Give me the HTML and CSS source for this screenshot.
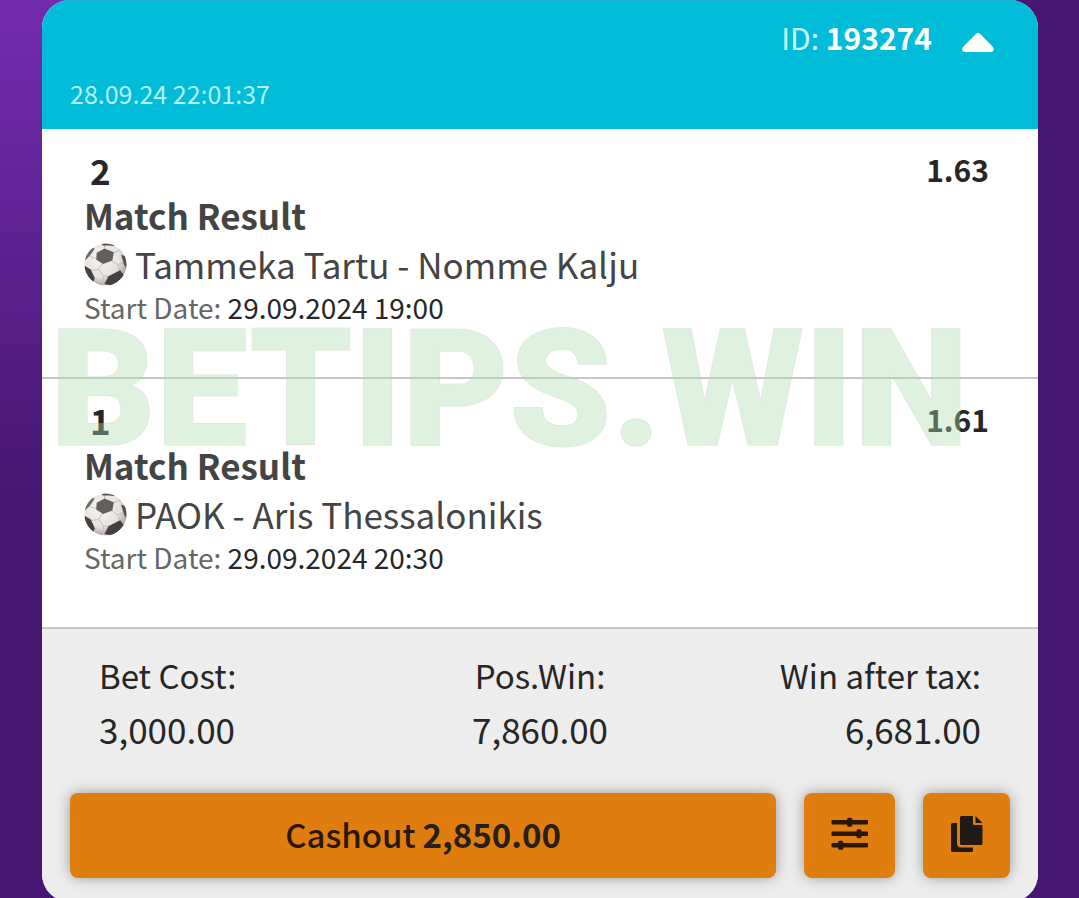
FILE: index.html
```html
<!DOCTYPE html>
<html lang="en">
<head>
<meta charset="utf-8">
<meta name="viewport" content="width=device-width, initial-scale=1">
<title>Bet 193274</title>
<link rel="stylesheet" href="styles.css">
</head>
<body>
<svg class="defs" width="0" height="0" aria-hidden="true">
  <defs>
    <radialGradient id="shade" cx="0.4" cy="0.35" r="0.68">
      <stop offset="0" stop-color="#f6f4f1"/><stop offset="0.65" stop-color="#e6e2df"/><stop offset="1" stop-color="#a39d9b"/>
    </radialGradient>
    <clipPath id="round"><circle cx="22" cy="22" r="21.5"/></clipPath>
    <symbol id="ball" viewBox="0 0 44 44">
      <g clip-path="url(#round)">
        <circle cx="22" cy="22" r="21.5" fill="url(#shade)"/>
        <path d="M21 6V2M30 10 38 7M28 18 34 22 38 30M34 22 43 20M19 21 15 27 8 28M15 27 20 34 26 34M13 16 6 14M20 34 20 43" fill="none" stroke="#c2bdb9" stroke-width="1"/>
        <path d="M13 10 21 5.500 30.500 9.500 29 18 19.500 21.500 12.500 17Z" fill="#62605d"/>
        <path d="M18 0 31 0 31 3 26 2.500 19 2.500Z" fill="#59554f"/>
        <path d="M8 4 11 6 6 13 1 18 0 12Z" fill="#6e6b66"/>
        <path d="M0 23 7 27 11 36 9 42 0 34Z" fill="#46413e"/>
        <path d="M25 34 37 28 41 33 31 44 21 42Z" fill="#45403f"/>
        <path d="M38 12 44 14 44 27 41 22Z" fill="#55504d"/>
      </g>
    </symbol>
  </defs>
</svg>
<main class="slip">
  <header class="slip-head">
    <div class="id-row">
      <span>ID: <b>193274</b></span>
      <button class="toggle" type="button" aria-label="Collapse">
        <svg width="32" height="19" viewBox="0 0 32 19"><path d="M13.500 1.200Q16-1 18.500 1.200L31 14Q33.500 18.500 29 19H3Q-1.500 18.500 1 14Z" fill="#fff"/></svg>
      </button>
    </div>
    <time class="placed">28.09.24 22:01:37</time>
  </header>
  <div class="events">
    <section class="event">
      <div class="pick"><b>2</b><b class="odd">1.63</b></div>
      <h2 class="market">Match Result</h2>
      <div class="teams"><svg class="ball" aria-hidden="true"><use href="#ball"/></svg>Tammeka Tartu - Nomme Kalju</div>
      <div class="start">Start Date: <time>29.09.2024 19:00</time></div>
    </section>
    <section class="event">
      <div class="pick"><b>1</b><b class="odd">1.61</b></div>
      <h2 class="market">Match Result</h2>
      <div class="teams"><svg class="ball" aria-hidden="true"><use href="#ball"/></svg>PAOK - Aris Thessalonikis</div>
      <div class="start">Start Date: <time>29.09.2024 20:30</time></div>
    </section>
    <div class="watermark">BETIPS.WIN</div>
  </div>
  <footer class="slip-foot">
    <dl class="totals">
      <div><dt>Bet Cost:</dt><dd>3,000.00</dd></div>
      <div><dt>Pos.Win:</dt><dd>7,860.00</dd></div>
      <div><dt>Win after tax:</dt><dd>6,681.00</dd></div>
    </dl>
    <div class="actions">
      <button class="btn cashout" type="button">Cashout <b>2,850.00</b></button>
      <button class="btn settings" type="button" aria-label="Cashout settings">
        <svg width="38" height="34" viewBox="0 0 38 34" fill="#2b1705"><rect x="0.500" y="3" width="36.500" height="4.400" rx="1"/><rect x="0.500" y="14.500" width="36.500" height="4.400" rx="1"/><rect x="0.500" y="26" width="36.500" height="4.400" rx="1"/><rect x="16.200" y="0.700" width="5" height="9" rx="1.500"/><rect x="25.500" y="12.200" width="5" height="9" rx="1.500"/><rect x="7.200" y="23.700" width="5" height="9" rx="1.500"/></svg>
      </button>
      <button class="btn copy" type="button" aria-label="Copy bet">
        <svg width="34" height="38" viewBox="0 0 34 38" fill="#211a14"><path d="M2.500 8H7V28Q7 32.500 11.500 32.500H23V35.500Q23 37 21.500 37H2.500Q1 37 1 35.500V9.500Q1 8 2.500 8Z"/><path d="M11.500 1H23V8.500Q23 10 24.500 10H32.500V28.500Q32.500 30 31 30H11.500Q10 30 10 28.500V2.500Q10 1 11.500 1Z"/><path d="M25.500 1 32.500 8H25.500Z"/></svg>
      </button>
    </div>
  </footer>
</main>
</body>
</html>
```
FILE: styles.css
```css
* { box-sizing: border-box; }
html { height: 100%; overflow: hidden; }
body {
  margin: 0;
  min-height: 100%;
  padding: 0 41px 0 42px;
  color: #262626;
  background: linear-gradient(90deg, transparent 50%, #451772 50%), linear-gradient(#742cae, #451772 500px);
  font-family: "Noto Sans CJK SC", "Open Sans", sans-serif;
  font-size: 35px;
}
.defs { position: absolute; }
.slip { border-radius: 28px; overflow: hidden; background: #fff; }
.slip-head {
  padding: 16px 44px 18px 28px;
  background: #00bcd8;
  border-top: 1px solid #1ba9d6;
  color: #c8f6fc;
}
.id-row {
  display: flex;
  justify-content: flex-end;
  align-items: center;
  gap: 30px;
  font-size: 30px;
  line-height: 40px;
}
.id-row b { font-weight: 700; color: #fff; }
.toggle { display: flex; padding: 10px 0 0; border: 0; background: none; }
.placed { display: block; margin-top: 18px; font-size: 25px; line-height: 36px; color: #b5f1f9; }
.events { position: relative; }
.event { padding: 20px 49px 52px 42px; border-bottom: 2px solid #c6c6c6; }
.pick { display: flex; justify-content: space-between; padding-left: 6px; line-height: 42px; }
.odd { font-size: 30px; line-height: 40px; }
.market { margin: 0; font-size: 35px; line-height: 48px; font-weight: 700; color: #444; }
.teams { display: flex; align-items: center; gap: 8px; line-height: 50px; color: #444; }
.ball { width: 43px; height: 43px; }
.start { font-size: 28px; line-height: 36px; color: #666; }
.start time { color: #262626; }
.watermark {
  position: absolute;
  left: 8px;
  top: 160px;
  font: 900 164px/200px Roboto, sans-serif;
  color: #addeaf;
  -webkit-text-stroke: 1px #a5b5a5;
  paint-order: stroke fill;
  opacity: .39;
  pointer-events: none;
}
.slip-foot { padding: 19px 28px 24px; background: #ededed; }
.totals { display: flex; margin: 0 29px 37px; line-height: 54px; }
.totals div { flex: 1; text-align: center; }
.totals div:first-child { text-align: left; }
.totals div:last-child { text-align: right; }
.totals dt { font-size: 33px; }
.totals dd { margin: 0; }
.actions { display: flex; gap: 28px; height: 85px; }
.btn {
  display: flex;
  justify-content: center;
  align-items: center;
  padding: 0 0 4px;
  border: 0;
  border-radius: 8px;
  background: #e07d0f;
  box-shadow: 0 0 14px rgba(0, 0, 0, .35);
  color: #2b1705;
  font: 500 33px/48px "Noto Sans CJK SC", "Open Sans", sans-serif;
}
.cashout { flex: 1; gap: 7px; }
.cashout b { font-weight: 700; color: #262019; }
.settings { width: 91px; }
.copy { width: 87px; }
```
